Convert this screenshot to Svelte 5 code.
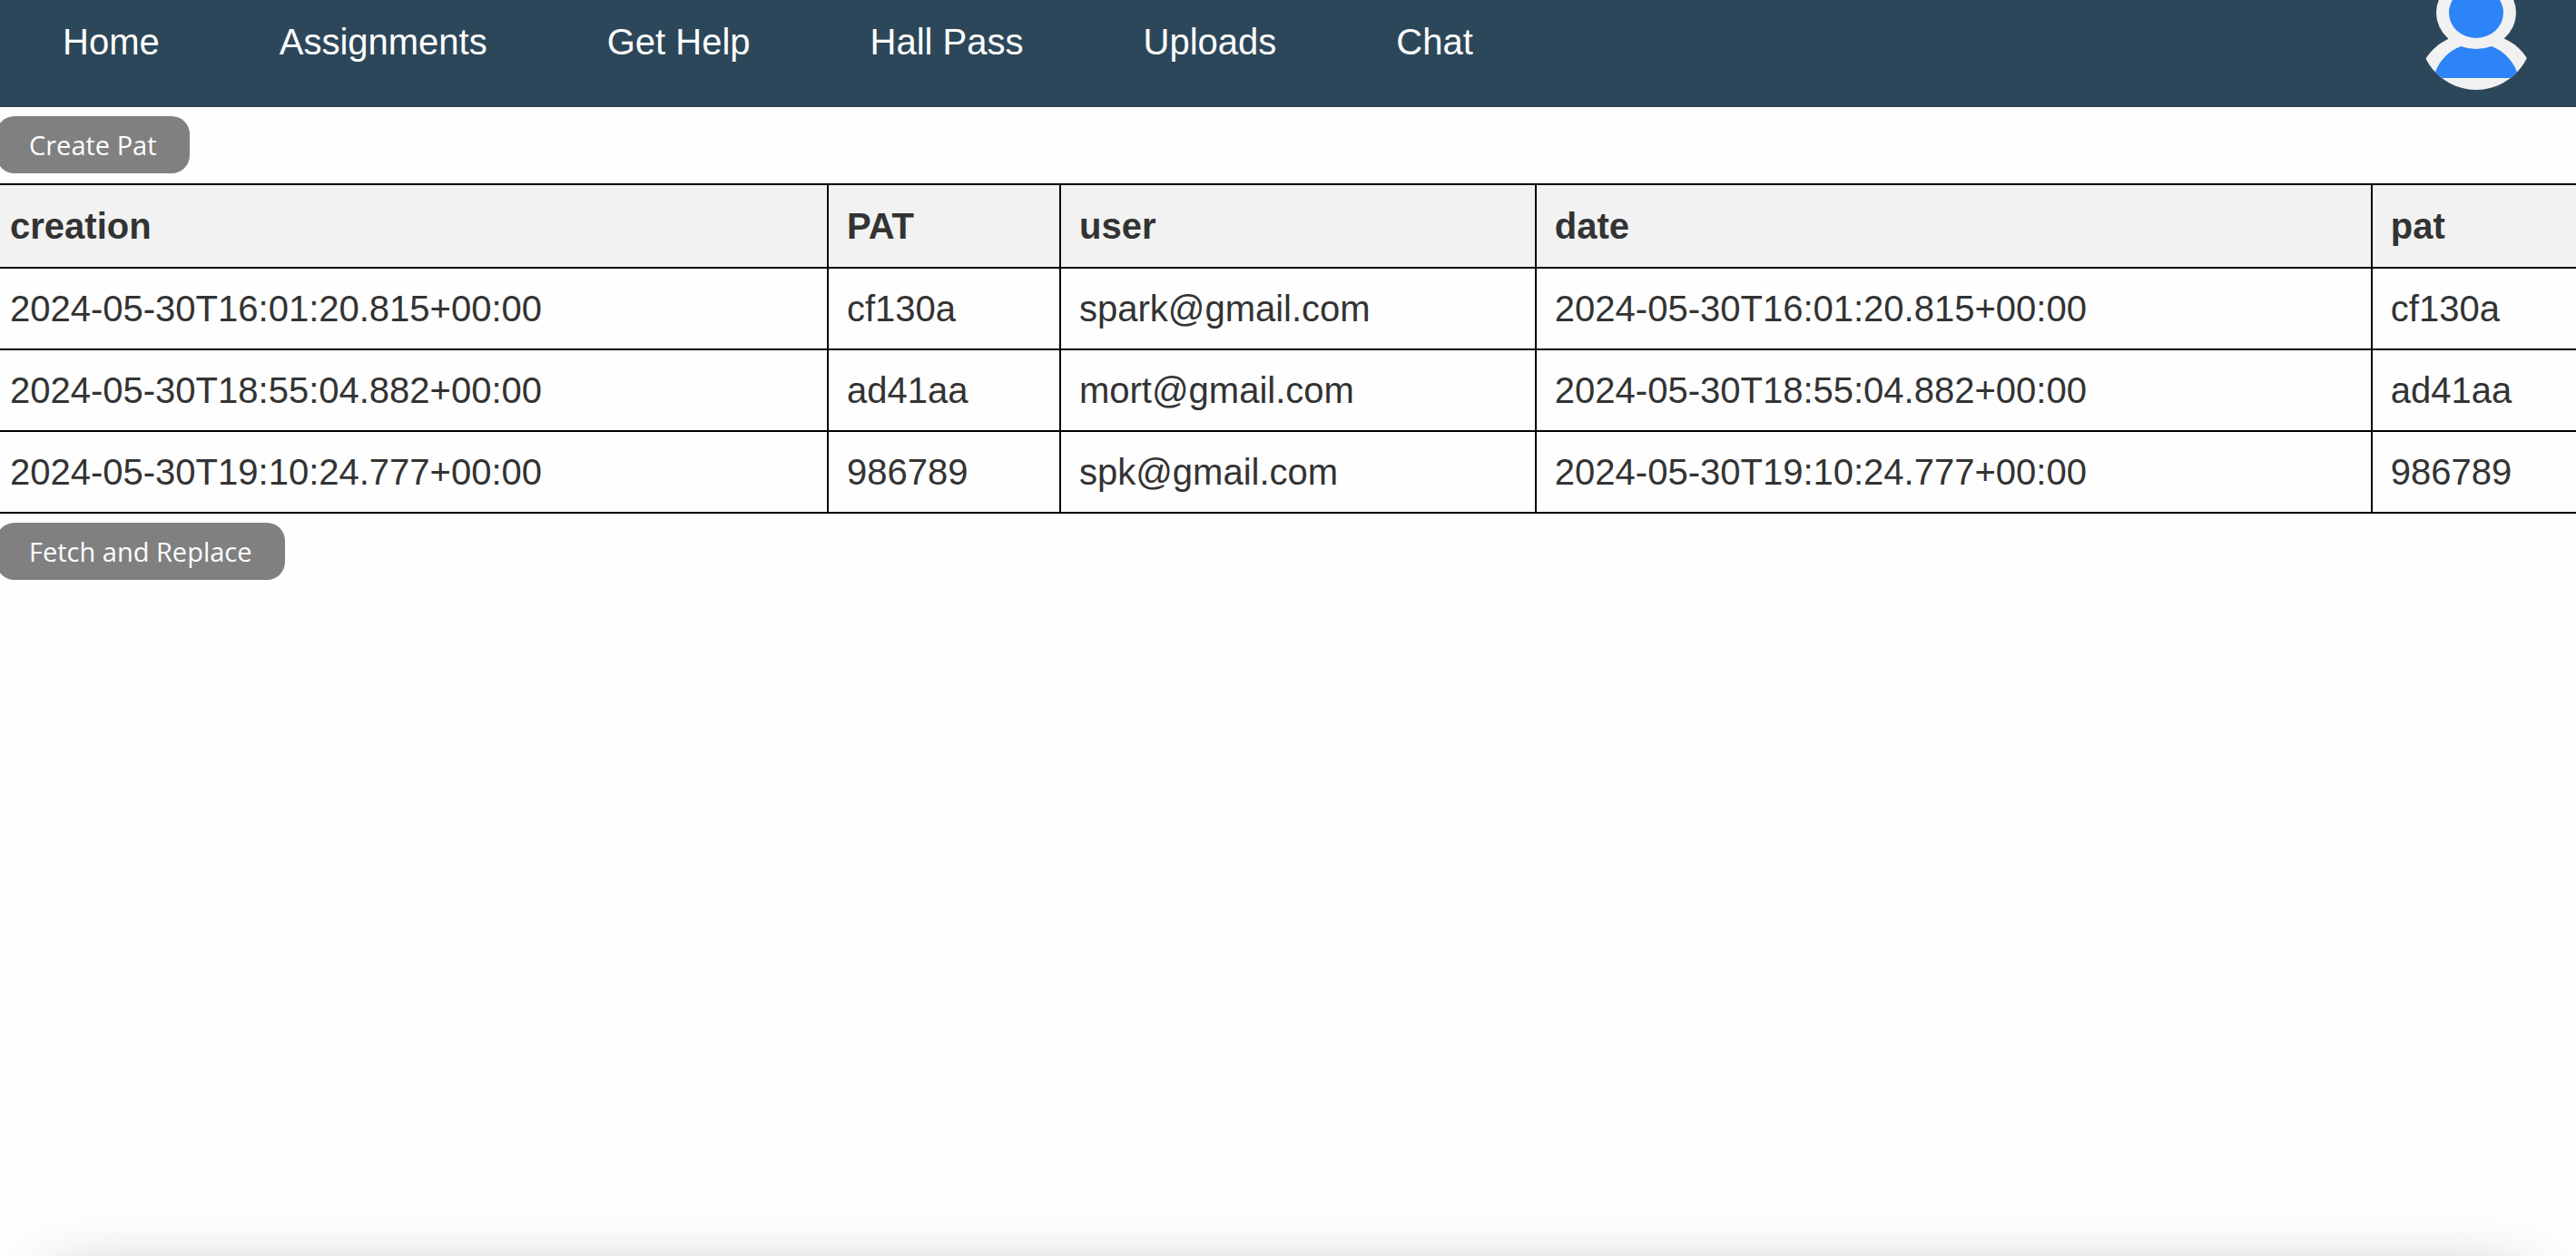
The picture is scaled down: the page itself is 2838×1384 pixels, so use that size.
<script>
  const links = ['Home', 'Assignments', 'Get Help', 'Hall Pass', 'Uploads', 'Chat'];
  const columns = ['creation', 'PAT', 'user', 'date', 'pat'];
  const rows = [
    { stamp: '2024-05-30T16:01:20.815+00:00', pat: 'cf130a', user: 'spark@gmail.com' },
    { stamp: '2024-05-30T18:55:04.882+00:00', pat: 'ad41aa', user: 'mort@gmail.com' },
    { stamp: '2024-05-30T19:10:24.777+00:00', pat: '986789', user: 'spk@gmail.com' },
  ];
</script>

<div class="page">
  <header>
    <nav>
      {#each links as link}
        <a href="#top">{link}</a>
      {/each}
    </nav>
    <button class="avatar" aria-label="Profile">
      <svg viewBox="0 0 124 124" aria-hidden="true">
        <defs><clipPath id="round"><circle cx="62" cy="62" r="62" /></clipPath></defs>
        <g clip-path="url(#round)">
          <path d="M0 124V103C5 88 16 75 31 68H94C109 75 120 88 124 103V124Z" fill="#f1f1f1" />
          <path d="M15 111C19 94 30 82 45 76H79C94 82 105 94 109 111Z" fill="#2d83f8" />
          <ellipse cx="62" cy="39" rx="44" ry="40" fill="#f1f1f1" />
          <ellipse cx="62" cy="39" rx="30" ry="28" fill="#2d83f8" />
        </g>
      </svg>
    </button>
  </header>

  <main>
    <button class="action">Create Pat</button>
    <table>
      <colgroup>
        <col class="c-stamp" /><col class="c-pat" /><col class="c-user" /><col class="c-date" /><col />
      </colgroup>
      <thead>
        <tr>
          {#each columns as column}<th scope="col">{column}</th>{/each}
        </tr>
      </thead>
      <tbody>
        {#each rows as row}
          <tr>
            <td>{row.stamp}</td>
            <td>{row.pat}</td>
            <td>{row.user}</td>
            <td>{row.stamp}</td>
            <td>{row.pat}</td>
          </tr>
        {/each}
      </tbody>
    </table>
    <button class="action">Fetch and Replace</button>
  </main>
  <div class="shade"></div>
</div>

<style>
  :global(body) {
    margin: 0;
    background: #fefefe;
  }
  .page {
    display: flex;
    flex-direction: column;
    min-height: 100vh;
    overflow: hidden;
    color: #333;
    font-family: 'Liberation Sans', Helvetica, Arial, sans-serif;
    font-size: 40px;
  }
  header {
    display: flex;
    justify-content: space-between;
    align-items: flex-end;
    padding: 0 48px 19px 69px;
    background: #2d475a;
  }
  nav {
    display: flex;
    gap: 132px;
    padding: 23px 0 30px;
  }
  nav a {
    color: #fff;
    line-height: 46px;
    text-decoration: none;
  }
  .avatar {
    width: 124px;
    height: 124px;
    margin-top: -25px;
    padding: 0;
    border: 0;
    background: none;
  }
  .avatar svg {
    display: block;
    width: 100%;
    height: 100%;
  }
  main {
    display: flex;
    flex-direction: column;
    align-items: flex-start;
    flex: 1;
    padding-top: 10px;
  }
  .action {
    height: 63px;
    margin-left: -4px;
    padding: 0 36px;
    border: 0;
    border-radius: 20px;
    background: #808080;
    color: #fff;
    font-family: 'Open Sans', 'Noto Sans', sans-serif;
    font-size: 29px;
    line-height: 40px;
  }
  table {
    width: 100%;
    margin: 11px 0 10px;
    table-layout: fixed;
    border-collapse: separate;
    border-spacing: 0;
    border-top: 2px solid #000;
  }
  .c-stamp { width: 32.17%; }
  .c-pat { width: 9.02%; }
  .c-user { width: 18.46%; }
  .c-date { width: 32.45%; }
  th,
  td {
    padding: 20px;
    border: 0 solid #000;
    border-width: 0 2px 2px 0;
    text-align: left;
    line-height: 48px;
    white-space: nowrap;
  }
  th {
    background: #f2f2f2;
    line-height: 50px;
  }
  th:first-child,
  td:first-child {
    padding-left: 11px;
  }
  th:last-child,
  td:last-child {
    border-right-width: 0;
  }
  .shade {
    flex: none;
    height: 200px;
    margin: 40px 62px -240px;
    box-shadow: 0 0 80px rgba(0, 0, 0, 0.5);
  }
</style>
